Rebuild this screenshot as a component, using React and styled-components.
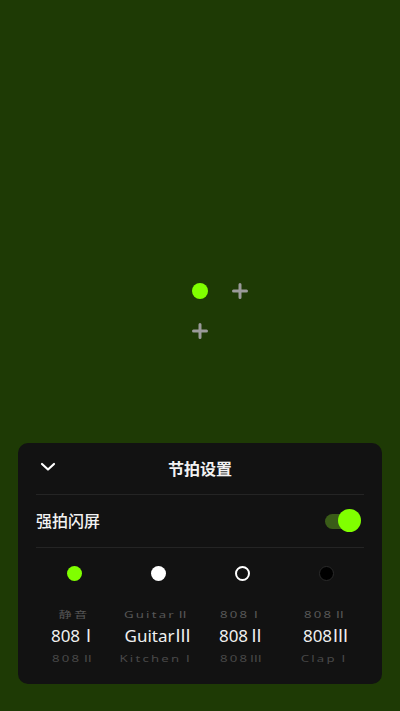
import React from "react";
import styled, { createGlobalStyle } from "styled-components";

const GlobalStyle = createGlobalStyle`
    html, body {
        margin: 0;
        padding: 0;
        background-color: #1e3a05;
        font-family: "Noto Sans", "Noto Sans CJK SC", sans-serif;
    }
`

export const Page = styled.div`
    width: 400px;
    height: 711px;
    background-color: #1e3a05;
    display: flex;
    flex-direction: column;
    overflow: hidden;
`

export const Stage = styled.div`
    height: 443px;
    display: grid;
    grid-template-columns: 40px 40px;
    grid-template-rows: 40px 40px;
    place-content: start center;
    padding-top: 271px;
    box-sizing: border-box;
    padding-left: 40px;
`

export const Cell = styled.div`
    width: 40px;
    height: 40px;
    display: flex;
    align-items: center;
    justify-content: center;
`

export const Beat = styled.div`
    width: 16px;
    height: 16px;
    border-radius: 50%;
    background-color: #80ff00;
`

export const Panel = styled.div`
    margin: 0 18px;
    height: 241px;
    background-color: #121212;
    border-radius: 10px;
    display: flex;
    flex-direction: column;
    padding: 0 18px;
`

export const Header = styled.div`
    height: 51px;
    display: flex;
    align-items: center;
    position: relative;
    border-bottom: 1px solid #242424;
`

export const Title = styled.div`
    flex: 1;
    text-align: center;
    color: #f2f2f2;
    font-size: 16px;
    font-weight: 600;
    font-family: "Noto Sans CJK SC", sans-serif;
    margin-top: -2px;
`

export const Back = styled.div`
    position: absolute;
    left: 4px;
    top: 16px;
    display: flex;
`

export const Row = styled.div`
    height: 52px;
    display: flex;
    align-items: center;
    justify-content: space-between;
    border-bottom: 1px solid #242424;
`

export const Label = styled.div`
    color: #f2f2f2;
    font-size: 16px;
    font-weight: 500;
    font-family: "Noto Sans CJK SC", sans-serif;
    margin-top: -2px;
`

export const Switch = styled.div`
    width: 36px;
    height: 24px;
    position: relative;
    margin-right: 3px;
`

export const Track = styled.div`
    position: absolute;
    left: 0;
    top: 5px;
    width: 30px;
    height: 15px;
    border-radius: 8px;
    background-color: #3a5c18;
`

export const Knob = styled.div`
    position: absolute;
    right: 0;
    top: 0;
    width: 23px;
    height: 23px;
    border-radius: 50%;
    background-color: #80ff00;
`

export const Picker = styled.div`
    display: grid;
    grid-template-columns: repeat(4, 1fr);
    margin: 0 -4px;
`

export const Column = styled.div`
    display: flex;
    flex-direction: column;
    align-items: center;
`

export const Dot = styled.div`
    width: 15px;
    height: 15px;
    box-sizing: border-box;
    border-radius: 50%;
    margin-top: 18px;
    background-color: ${p => p.$fill};
    border: ${p => p.$ring ? "2px solid #ffffff" : p.$dim ? "1px solid #2a2a2a" : "none"};
`

export const Faded = styled.div`
    margin-top: ${p => p.$first ? 27 : 6}px;
    height: 14px;
    font-size: 12px;
    line-height: 14px;
    color: ${p => p.$color};
    letter-spacing: 2px;
    transform: scale(1.1, 0.75);
    font-family: "Noto Sans", "Noto Sans CJK SC", sans-serif;
    white-space: nowrap;
`

export const Current = styled.div`
    margin-top: 4px;
    height: 20px;
    line-height: 20px;
    font-size: 17px;
    color: #f0f0f0;
    font-family: "Noto Sans", "Noto Sans CJK SC", sans-serif;
    white-space: nowrap;
`

const Plus = () => (
    <svg width="16" height="16" viewBox="0 0 16 16">
        <path d="M8 1.5v13M1.5 8h13" stroke="#9a9a9a" strokeWidth="3" strokeLinecap="round" />
    </svg>
)

const sounds = [
    { fill: "#80ff00", top: "静音", mid: "808Ⅰ", bottom: "808Ⅱ" },
    { fill: "#ffffff", top: "GuitarⅡ", mid: "GuitarⅢ", bottom: "KitchenⅠ" },
    { fill: "transparent", ring: true, top: "808Ⅰ", mid: "808Ⅱ", bottom: "808Ⅲ" },
    { fill: "#000000", dim: true, top: "808Ⅱ", mid: "808Ⅲ", bottom: "ClapⅠ" },
]

export default function App() {
    return (
        <Page>
            <GlobalStyle />
            <Stage>
                <Cell><Beat /></Cell>
                <Cell><Plus /></Cell>
                <Cell><Plus /></Cell>
                <Cell />
            </Stage>
            <Panel>
                <Header>
                    <Back>
                        <svg width="16" height="16" viewBox="0 0 16 16">
                            <path d="M2 5l6 5.5L14 5" fill="none" stroke="#ffffff" strokeWidth="2.2" strokeLinecap="round" strokeLinejoin="round" />
                        </svg>
                    </Back>
                    <Title>节拍设置</Title>
                </Header>
                <Row>
                    <Label>强拍闪屏</Label>
                    <Switch>
                        <Track />
                        <Knob />
                    </Switch>
                </Row>
                <Picker>
                    {sounds.map((s, i) => (
                        <Column key={i}>
                            <Dot $fill={s.fill} $ring={s.ring} $dim={s.dim} />
                            <Faded $first $color="#575757">{s.top}</Faded>
                            <Current>{s.mid}</Current>
                            <Faded $color="#484848">{s.bottom}</Faded>
                        </Column>
                    ))}
                </Picker>
            </Panel>
        </Page>
    )
}
